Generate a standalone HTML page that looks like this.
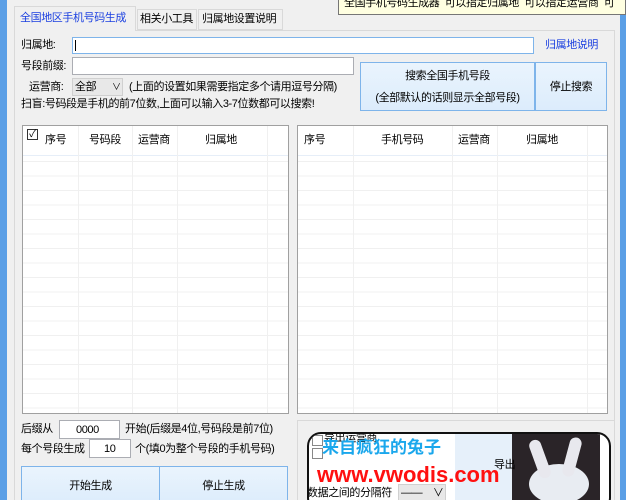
<!DOCTYPE html>
<html style="width:626px;height:500px;overflow:hidden"><head><meta charset="utf-8"><style>
*{margin:0;padding:0;box-sizing:border-box}
body{width:626px;height:500px;overflow:hidden;background:#f0f0f0;position:relative;font-family:"Liberation Sans","Noto Sans CJK SC",sans-serif;font-size:11px;letter-spacing:-0.4px;color:#000}
.a{position:absolute}
.t{position:absolute;white-space:nowrap;line-height:14px}
.inp{position:absolute;background:#fff;border:1px solid #abadb3}
.btn{position:absolute;background:linear-gradient(#eaf4fd,#dcecfc);border:1px solid #7eb4ea;display:flex;align-items:center;justify-content:center;text-align:center;line-height:22px}
.list{position:absolute;background:#fff;border:1px solid #a0a0a0;
background-image:repeating-linear-gradient(#fff 0,#fff 13.5px,#f0f0f0 13.5px,#f0f0f0 14.5px);background-position:0 7px}
.hd{position:absolute;top:0;height:30px;background:#fff;border-bottom:1px solid #e6eef8}
.vl{position:absolute;top:0;bottom:0;width:1px;background:#f0f0f0}
</style></head><body>
<div class="a" style="left:0;top:0;width:7px;height:500px;background:#5b9fe6"></div>
<div class="a" style="left:620px;top:0;width:6px;height:500px;background:#5b9fe6"></div>
<div class="a" style="left:14px;top:30px;width:601px;height:470px;border:1px solid #d9d9d9;border-bottom:none;background:#f0f0f0"></div>
<div class="a" style="left:14px;top:6px;width:122px;height:25px;background:#f0f0f0;border:1px solid #d9d9d9;border-bottom:none"></div>
<div class="t" style="left:20px;top:11px;color:#1a3fe0">全国地区手机号码生成</div>
<div class="a" style="left:137px;top:9px;width:60px;height:21px;background:#f0f0f0;border:1px solid #d9d9d9"></div>
<div class="t" style="left:140px;top:12px">相关小工具</div>
<div class="a" style="left:198px;top:9px;width:85px;height:21px;background:#f0f0f0;border:1px solid #d9d9d9"></div>
<div class="t" style="left:202px;top:12px">归属地设置说明</div>
<!-- tooltip -->
<div class="a" style="left:338px;top:0;width:288px;height:15px;background:#ffffe1;border:1px solid #767676;border-top:none"></div>
<div class="t" style="left:344px;top:-4px">全国手机号码生成器&nbsp; 可以指定归属地&nbsp; 可以指定运营商&nbsp; 可</div>
<!-- form -->
<div class="t" style="left:21px;top:38px">归属地:</div>
<div class="inp" style="left:72px;top:37px;width:462px;height:17px;border-color:#7eb4ea"></div>
<div class="a" style="left:75px;top:40px;width:1px;height:11px;background:#000"></div>
<div class="t" style="left:545px;top:38px;color:#1a3fe0">归属地说明</div>
<div class="t" style="left:21px;top:59px">号段前缀:</div>
<div class="inp" style="left:72px;top:57px;width:282px;height:18px"></div>
<div class="t" style="left:29px;top:80px">运营商:</div>
<div class="a" style="left:72px;top:78px;width:51px;height:18px;background:#e8e8e8;border:1px solid #d0d0d0"></div>
<div class="t" style="left:75px;top:80px">全部</div>
<div class="t" style="left:112px;top:80px;font-size:9px">∨</div>
<div class="t" style="left:129px;top:80px">(上面的设置如果需要指定多个请用逗号分隔)</div>
<div class="t" style="left:21px;top:97px">扫盲:号码段是手机的前7位数,上面可以输入3-7位数都可以搜索!</div>
<div class="btn" style="left:360px;top:62px;width:175px;height:49px">搜索全国手机号段<br>(全部默认的话则显示全部号段)</div>
<div class="btn" style="left:535px;top:62px;width:72px;height:49px">停止搜索</div>
<!-- lists -->
<div class="list" style="left:22px;top:125px;width:267px;height:289px">
<div class="hd" style="left:0;width:265px"></div>
<div class="vl" style="left:55px"></div><div class="vl" style="left:109px"></div><div class="vl" style="left:154px"></div><div class="vl" style="left:244px"></div>
<div class="a" style="left:4px;top:3px;width:11px;height:11px;border:1px solid #333;background:#fff;font-size:10px;line-height:9px;text-align:center">✓</div>
<div class="t" style="left:22px;top:7px">序号</div>
<div class="t" style="left:66px;top:7px">号码段</div>
<div class="t" style="left:115px;top:7px">运营商</div>
<div class="t" style="left:182px;top:7px">归属地</div>
</div>
<div class="list" style="left:297px;top:125px;width:311px;height:289px">
<div class="hd" style="left:0;width:309px"></div>
<div class="vl" style="left:55px"></div><div class="vl" style="left:154px"></div><div class="vl" style="left:199px"></div><div class="vl" style="left:289px"></div>
<div class="t" style="left:6px;top:7px">序号</div>
<div class="t" style="left:83px;top:7px">手机号码</div>
<div class="t" style="left:160px;top:7px">运营商</div>
<div class="t" style="left:228px;top:7px">归属地</div>
</div>
<!-- bottom left -->
<div class="t" style="left:21px;top:422px">后缀从</div>
<div class="inp" style="left:59px;top:420px;width:61px;height:19px"></div>
<div class="t" style="left:76px;top:423px">0000</div>
<div class="t" style="left:125px;top:422px">开始(后缀是4位,号码段是前7位)</div>
<div class="t" style="left:21px;top:442px">每个号段生成</div>
<div class="inp" style="left:89px;top:439px;width:42px;height:19px"></div>
<div class="t" style="left:104px;top:442px">10</div>
<div class="t" style="left:135px;top:442px">个(填0为整个号段的手机号码)</div>
<div class="btn" style="left:21px;top:466px;width:139px;height:40px">开始生成</div>
<div class="btn" style="left:159px;top:466px;width:129px;height:40px">停止生成</div>
<!-- bottom right -->
<div class="a" style="left:297px;top:420px;width:318px;height:90px;border:1px solid #d9d9d9"></div>
<div class="a" style="left:307px;top:432px;width:304px;height:80px;border:2px solid #111;border-radius:14px;background:#fff;overflow:hidden">
 <div class="a" style="left:146px;top:0;width:58px;height:80px;background:#e6f0fa"></div>
 <div class="a" style="left:203px;top:0;width:88px;height:80px;background:#2a2428"></div>
 <div class="a" style="left:220px;top:30px;width:60px;height:40px;border-radius:50%;background:#e8ecf2"></div>
 <div class="a" style="left:225px;top:5px;width:12px;height:40px;border-radius:6px;background:#e8e8ee;transform:rotate(-20deg)"></div>
 <div class="a" style="left:257px;top:3px;width:12px;height:40px;border-radius:6px;background:#e8e8ee;transform:rotate(15deg)"></div>
 <div class="a" style="left:3px;top:1px;width:11px;height:11px;border:1px solid #888;background:#fff"></div>
 <div class="t" style="left:15px;top:-3px">导出运营商</div>
 <div class="a" style="left:3px;top:14px;width:11px;height:11px;border:1px solid #888;background:#fff"></div>
 <div class="t" style="left:13px;top:4px;color:#1aa7ec;font-size:17px;font-weight:bold;line-height:20px;letter-spacing:0">来自疯狂的兔子</div>
 <div class="t" style="left:185px;top:24px">导出</div>
 <div class="t" style="left:8px;top:28px;color:#ff1010;font-size:22px;font-weight:bold;line-height:26px;letter-spacing:0">www.vwodis.com</div>
 <div class="t" style="left:-2px;top:52px">数据之间的分隔符</div>
 <div class="a" style="left:89px;top:50px;width:48px;height:18px;background:#e8e8e8;border:1px solid #d0d0d0"></div>
 <div class="t" style="left:92px;top:52px">——&nbsp;&nbsp;&nbsp;&nbsp;∨</div>
</div>
</body></html>
